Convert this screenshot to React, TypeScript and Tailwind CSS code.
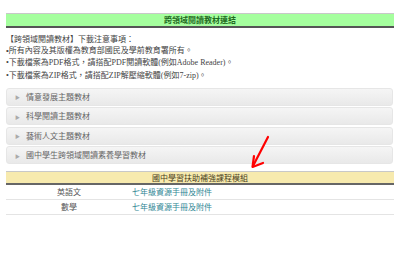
import React from "react";

const cjk = { fontFamily: '"Noto Sans CJK TC", "Noto Sans", sans-serif' };
const sansMixed = { fontFamily: '"Liberation Sans", "Noto Sans CJK TC", sans-serif' };
const serifMixed = { fontFamily: '"Liberation Serif", "Noto Sans CJK TC", serif' };

function AccItem({ label }: { label: string }) {
  return (
    <div className="flex h-[18px] items-center rounded-[3px] border border-[#e6e6e6] bg-gradient-to-b from-[#f5f5f5] to-[#e9e9e9] pl-[8px] text-[8px] leading-none text-[#666]">
      <span className="mr-[6px] text-[5px] text-[#aaa]">▶</span>
      <span>{label}</span>
    </div>
  );
}

function Row({ subject, link }: { subject: string; link: string }) {
  return (
    <div className="grid h-[15px] grid-cols-[126px_1fr] items-center border-b border-[#e4e4e4] text-[8px] leading-none">
      <div className="text-center text-[#555]">{subject}</div>
      <div className="text-[#2f8694]">{link}</div>
    </div>
  );
}

export default function App() {
  return (
    <div className="relative h-[254px] w-[400px] overflow-hidden bg-white" style={cjk}>
      <div className="px-[6px] pt-[13px]">
        <div className="flex h-[15px] items-center justify-center border-t border-t-[#c8c8c8] border-b-2 border-b-[#555] bg-[#a5ff9e] text-[8px] font-bold leading-none text-[#1f6b1f]">
          跨領域閱讀教材連結
        </div>
        <div className="mt-[5px] text-[8px] leading-[12.2px] text-[#444]">
          <div>【跨領域閱讀教材】下載注意事項：</div>
          <div style={sansMixed}>•所有內容及其版權為教育部國民及學前教育署所有。</div>
          <div style={serifMixed}>•下載檔案為PDF格式，請搭配PDF閱讀軟體(例如Adobe Reader)。</div>
          <div style={serifMixed}>•下載檔案為ZIP格式，請搭配ZIP解壓縮軟體(例如7-zip)。</div>
        </div>
        <div className="mt-[6px] flex flex-col gap-[1.5px] pr-[1px]">
          <AccItem label="情意發展主題教材" />
          <AccItem label="科學閱讀主題教材" />
          <AccItem label="藝術人文主題教材" />
          <AccItem label="國中學生跨領域閱讀素養學習教材" />
        </div>
        <div className="mt-[7px] flex h-[14px] items-center justify-center border-t border-t-[#c8c8c8] border-b-2 border-b-[#666] bg-[#f7eaae] text-[8px] leading-none text-[#4a3e20]">
          國中學習扶助補強課程模組
        </div>
        <Row subject="英語文" link="七年級資源手冊及附件" />
        <Row subject="數學" link="七年級資源手冊及附件" />
      </div>
      <svg className="absolute left-[248px] top-[133px]" width="26" height="38" viewBox="0 0 26 38">
        <path d="M20 4 L5 33" stroke="#f00" strokeWidth="2.2" strokeLinecap="round" fill="none" />
        <path d="M6 23 L4.5 34 L15 30" stroke="#f00" strokeWidth="2.2" strokeLinecap="round" strokeLinejoin="round" fill="none" />
      </svg>
    </div>
  );
}
